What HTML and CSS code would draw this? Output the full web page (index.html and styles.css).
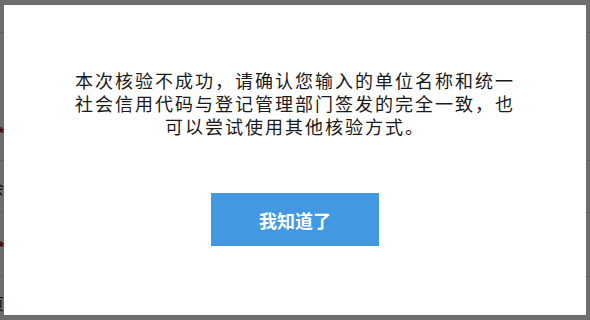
FILE: index.html
```html
<!DOCTYPE html>
<html lang="zh-CN">
<head>
<meta charset="utf-8">
<title>核验提示</title>
<link rel="stylesheet" href="styles.css">
</head>
<body>
<div class="page">
  <div class="row row-a"></div>
  <div class="row row-b"><span class="req">*</span></div>
  <div class="row row-c"><span class="lbl">会</span></div>
  <div class="row row-d"><span class="req">*</span></div>
  <div class="row row-e"><span class="lbl">页</span></div>
</div>
<div class="overlay">
  <div class="dialog">
    <p class="msg">本次核验不成功，请确认您输入的单位名称和统一社会信用代码与登记管理部门签发的完全一致，也可以尝试使用其他核验方式。</p>
    <button class="btn" type="button">我知道了</button>
  </div>
</div>
</body>
</html>
```

FILE: styles.css
```css
html, body {
  margin: 0;
  padding: 0;
  background: #ffffff;
  font-family: "Noto Sans CJK SC", "Noto Sans", sans-serif;
  overflow: hidden;
}

.page {
  width: 590px;
  height: 320px;
  display: flex;
  flex-direction: column;
}

.row {
  border-bottom: 1px solid #d9d9d9;
  display: flex;
  align-items: center;
  font-size: 16px;
  color: #333;
  box-sizing: border-box;
}

.row-a { height: 33px; }
.row-b { height: 128px; align-items: flex-end; padding-bottom: 15px; }
.row-c { height: 52px; }
.row-d { height: 64px; align-items: flex-start; padding-top: 22px; }
.row-e { height: 40px; border-bottom: none; padding-top: 12px; }

.req {
  color: #c0141b;
  font-weight: bold;
  margin-left: -3px;
  font-size: 16px;
}

.lbl {
  margin-left: -12px;
}

.overlay {
  position: fixed;
  inset: 0;
  background: rgba(0, 0, 0, 0.57);
  display: flex;
  align-items: center;
  justify-content: center;
}

.dialog {
  width: 582px;
  height: 310px;
  background: #ffffff;
  box-sizing: border-box;
  padding-top: 64px;
  display: flex;
  flex-direction: column;
  align-items: center;
}

.msg {
  margin: 0;
  width: 448px;
  font-size: 18px;
  line-height: 23px;
  letter-spacing: 2px;
  color: #1a1a1a;
  text-align: center;
}

.btn {
  margin-top: 55px;
  width: 168px;
  height: 53px;
  border: none;
  background: #4299e1;
  color: #ffffff;
  font-family: "Noto Sans CJK SC", sans-serif;
  font-size: 18px;
  font-weight: bold;
  cursor: pointer;
}
```
